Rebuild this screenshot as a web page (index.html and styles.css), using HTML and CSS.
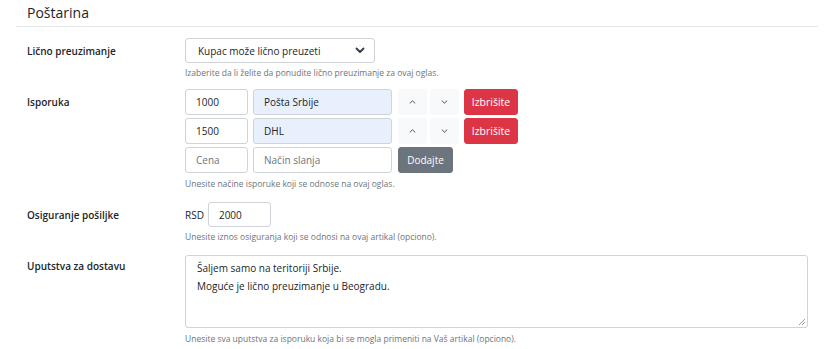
FILE: index.html
```html
<!DOCTYPE html>
<html lang="sr">
<head>
    <meta charset="UTF-8">
    <title>Poštarina</title>
    <link rel="stylesheet" href="styles.css">
</head>
<body>
    <div class="section">
        <h5 class="section-title">Poštarina</h5>

        <div class="form-row row-licno">
            <label class="form-label">Lično preuzimanje</label>
            <div class="form-control-col">
                <div class="select">
                    <span>Kupac može lično preuzeti</span>
                    <svg width="10" height="7" viewBox="0 0 10 7"><path d="M1.5 1.5 L5 5 L8.5 1.5" fill="none" stroke="#343a40" stroke-width="1.8" stroke-linecap="round" stroke-linejoin="round"/></svg>
                </div>
                <div class="help">Izaberite da li želite da ponudite lično preuzimanje za ovaj oglas.</div>
            </div>
        </div>

        <div class="form-row row-isporuka">
            <label class="form-label">Isporuka</label>
            <div class="form-control-col">
                <div class="ship-list">
                    <div class="ship-row">
                        <div class="input price">1000</div>
                        <div class="input name autofill">Pošta Srbije</div>
                        <button class="btn btn-light btn-up"><svg width="7" height="4" viewBox="0 0 7 4"><path d="M0.8 3.4 L3.5 0.8 L6.2 3.4" fill="none" stroke="#495057" stroke-width="1"/></svg></button>
                        <button class="btn btn-light btn-down"><svg width="7" height="4" viewBox="0 0 7 4"><path d="M0.8 0.6 L3.5 3.2 L6.2 0.6" fill="none" stroke="#495057" stroke-width="1"/></svg></button>
                        <button class="btn btn-danger">Izbrišite</button>
                    </div>
                    <div class="ship-row">
                        <div class="input price">1500</div>
                        <div class="input name autofill">DHL</div>
                        <button class="btn btn-light btn-up"><svg width="7" height="4" viewBox="0 0 7 4"><path d="M0.8 3.4 L3.5 0.8 L6.2 3.4" fill="none" stroke="#495057" stroke-width="1"/></svg></button>
                        <button class="btn btn-light btn-down"><svg width="7" height="4" viewBox="0 0 7 4"><path d="M0.8 0.6 L3.5 3.2 L6.2 0.6" fill="none" stroke="#495057" stroke-width="1"/></svg></button>
                        <button class="btn btn-danger">Izbrišite</button>
                    </div>
                    <div class="ship-row">
                        <div class="input price placeholder">Cena</div>
                        <div class="input name placeholder">Način slanja</div>
                        <button class="btn btn-secondary">Dodajte</button>
                    </div>
                </div>
                <div class="help help-ship">Unesite načine isporuke koji se odnose na ovaj oglas.</div>
            </div>
        </div>

        <div class="form-row row-osig">
            <label class="form-label">Osiguranje pošiljke</label>
            <div class="form-control-col">
                <div class="insure">
                    <span class="currency">RSD</span>
                    <div class="input amount">2000</div>
                </div>
                <div class="help">Unesite iznos osiguranja koji se odnosi na ovaj artikal (opciono).</div>
            </div>
        </div>

        <div class="form-row row-uputstva">
            <label class="form-label">Uputstva za dostavu</label>
            <div class="form-control-col">
                <div class="textarea">
                    <div>Šaljem samo na teritoriji Srbije.</div>
                    <div>Moguće je lično preuzimanje u Beogradu.</div>
                    <svg class="grip" width="8" height="8" viewBox="0 0 8 8"><path d="M7 1 L1 7 M7 4 L4 7" stroke="#999" stroke-width="1"/></svg>
                </div>
                <div class="help help-text">Unesite sva uputstva za isporuku koja bi se mogla primeniti na Vaš artikal (opciono).</div>
            </div>
        </div>
    </div>
</body>
</html>
```

FILE: styles.css
```css
body {
    margin: 0;
    background: #fff;
    font-family: "Open Sans", "Noto Sans", sans-serif;
    color: #212529;
}

.section {
    padding: 0 8px 0 16px;
}

.section-title {
    margin: 0;
    padding: 3px 0 3px 11px;
    height: 20px;
    font-size: 14px;
    font-weight: 400;
    line-height: 20px;
    border-bottom: 1px solid #e6e8ea;
}

.form-row {
    display: grid;
    grid-template-columns: 158px 1fr;
    padding-left: 11px;
}

.row-licno { margin-top: 11px; }
.row-isporuka { margin-top: 10px; }
.row-osig { margin-top: 12px; }
.row-uputstva { margin-top: 12px; }

.form-label {
    font-size: 10px;
    font-weight: 600;
    line-height: 26px;
    color: #212529;
}

.row-uputstva .form-label {
    line-height: 22px;
}

.help {
    margin-top: 4px;
    font-size: 8.5px;
    line-height: 12px;
    color: #6c757d;
}

.help-ship { margin-top: 5px; }
.help-text { margin-top: 5px; }

.select {
    width: 190px;
    height: 25px;
    box-sizing: border-box;
    border: 1px solid #ced4da;
    border-radius: 3px;
    display: flex;
    align-items: center;
    justify-content: space-between;
    padding: 0 9px 0 12px;
    font-size: 10px;
}

.ship-list {
    display: flex;
    flex-direction: column;
    gap: 3px;
}

.ship-row {
    display: flex;
    gap: 5px;
}

.input {
    height: 26px;
    box-sizing: border-box;
    border: 1px solid #ced4da;
    border-radius: 3px;
    padding: 0 10px;
    font-size: 10px;
    line-height: 24px;
    color: #212529;
}

.input.price { width: 63px; }
.input.name { width: 139px; }
.input.autofill { background: #e8f0fe; }
.input.placeholder { color: #6c757d; }

.btn {
    height: 26px;
    box-sizing: border-box;
    border: 1px solid transparent;
    border-radius: 3px;
    font-family: inherit;
    font-size: 10px;
    padding: 0;
    cursor: pointer;
}

.btn-light {
    width: 29px;
    background: #f8f9fa;
    border-color: #f8f9fa;
    display: flex;
    align-items: center;
    justify-content: center;
}

.btn-up { margin-left: 1px; }
.btn-down { margin-left: -2px; }

.btn-danger {
    width: 54px;
    background: #dc3545;
    border-color: #dc3545;
    color: #fff;
    font-size: 10.5px;
}

.btn-secondary {
    width: 55px;
    margin-left: 1px;
    background: #6c757d;
    border-color: #6c757d;
    color: #fff;
}

.insure {
    display: flex;
    align-items: center;
    gap: 4px;
}

.currency {
    font-size: 10px;
}

.input.amount {
    width: 63px;
    height: 25px;
}

.textarea {
    position: relative;
    width: 623px;
    height: 73px;
    box-sizing: border-box;
    border: 1px solid #ced4da;
    border-radius: 3px;
    padding: 3px 11px;
    font-size: 10px;
    line-height: 18px;
}

.grip {
    position: absolute;
    right: 1px;
    bottom: 1px;
}
```
